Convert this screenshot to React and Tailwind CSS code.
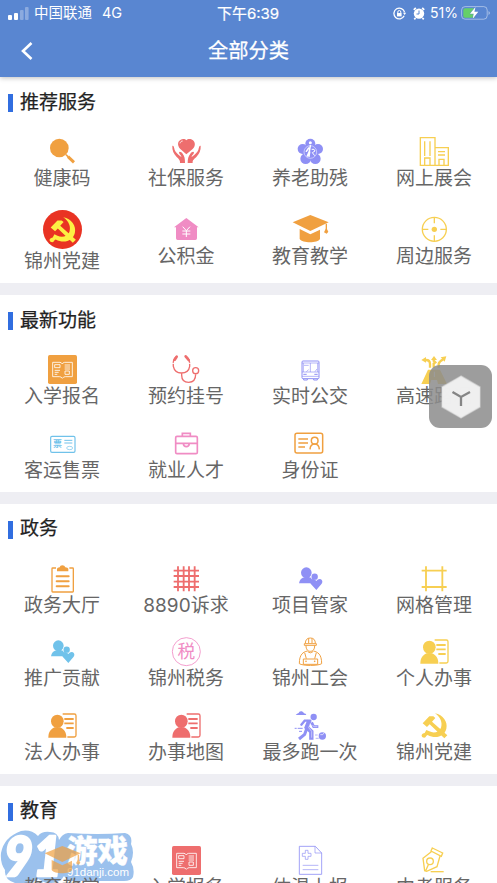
const ORANGE = "#f0a040";
const RED = "#ee6e6e";
const PURPLE = "#8f90f5";
const YELLOW = "#f7cf52";
const PINK = "#f08cc4";
const BLUE = "#70c2ea";

function Icon({ children, color, className = "size-[29px]" }) {
    return (
        <svg viewBox="0 0 87 87" className={`block overflow-visible ${className}`} color={color} fill="none">
            {children}
        </svg>
    );
}

function Magnifier() {
    return (
        <Icon color={ORANGE}>
            <circle cx="34" cy="33" r="28" fill="currentColor" />
            <path d="M54 53L61 60" stroke="currentColor" strokeWidth="5" />
            <path d="M60 59L78 76" stroke="currentColor" strokeWidth="9" />
        </Icon>
    );
}

function HeartHands() {
    return (
        <Icon color={RED}>
            <path d="M43 52L25 36C15 26 17 13 25 9C32 4 40 6 43 10C47 5 56 4 63 10C71 17 70 29 62 36Z" fill="currentColor" />
            <path d="M24 19C25 15 28 12 32 12" stroke="#fff" strokeWidth="2.5" />
            <g fill="currentColor">
                <path d="M1 27C5 25 6 31 8 39C11 46 18 52 24 57L28 60C29 55 22 52 21 47C22 42 28 45 32 50C38 57 39 66 39 78H24C25 69 20 66 14 60C5 51 0 40 1 27Z" />
                <path d="M86 27C82 25 81 31 79 39C76 46 69 52 63 57L59 60C58 55 65 52 66 47C65 42 59 45 55 50C49 57 47 66 47 78H62C61 69 67 66 73 60C82 51 87 40 86 27Z" />
            </g>
        </Icon>
    );
}

function Flower() {
    return (
        <Icon color={PURPLE}>
            <g fill="currentColor">
                <circle cx="43" cy="20" r="15" />
                <circle cx="20" cy="36" r="15" />
                <circle cx="66" cy="36" r="15" />
                <circle cx="29" cy="65" r="16" />
                <circle cx="58" cy="65" r="16" />
                <circle cx="43" cy="44" r="22" />
            </g>
            <circle cx="43" cy="45" r="19" stroke="#fff" strokeWidth="1.5" />
            <circle cx="43" cy="17" r="4.5" fill="#fff" />
            <path d="M43 26L40 43L34 57M38 33L31 43M41 45L39 58" stroke="#fff" strokeWidth="4.5" strokeLinecap="round" />
            <path d="M47 37H54L57 42L49 47L56 56" stroke="#fff" strokeWidth="3" />
        </Icon>
    );
}

function Buildings() {
    return (
        <Icon color={YELLOW}>
            <path d="M1 2H45V85H1ZM45 32H85V85H45M14 13V57M30 13V57M14 85V63H30V85M54 44H75M54 54H75M57 85V67H72V85" stroke="currentColor" strokeWidth="4" />
        </Icon>
    );
}

function Emblem() {
    return (
        <g>
            <path d="M45 7C69 11 84 33 79 53C74 75 48 86 23 72C18 73 19 79 13 80C8 80 4 77 5 72C6 68 11 67 14 66L19 57L28 61C42 68 57 63 63 50C68 35 62 19 45 7Z" fill="currentColor" />
            <path d="M8 37L28 16H40L46 21L36 32L82 73L73 82L29 40L21 48Z" fill="currentColor" />
        </g>
    );
}

function PartyBadge() {
    return (
        <Icon color="#fdf043" className="size-[39px]">
            <circle cx="43.5" cy="43.5" r="43.5" fill="#e93323" />
            <g transform="translate(11 11) scale(.76)">
                <Emblem />
            </g>
        </Icon>
    );
}

function PartyIcon() {
    return (
        <Icon color={YELLOW}>
            <Emblem />
        </Icon>
    );
}

function HouseYen() {
    return (
        <Icon color={PINK}>
            <path d="M43 9L80 37H75V70Q75 75 70 75H17Q12 75 12 70V37H6Z" fill="currentColor" />
            <path d="M32 35L43 47L54 35M43 47V66M31 48H55M31 57H55" stroke="#fff" strokeWidth="3" />
        </Icon>
    );
}

function GradCap() {
    return (
        <Icon color={ORANGE}>
            <path d="M43 0L98 22L43 48L-10 22Z" fill="currentColor" />
            <path d="M11 42L43 58L72 44V72C65 85 19 85 11 72Z" fill="currentColor" />
            <path d="M91 26V46" stroke="currentColor" strokeWidth="4" />
            <path d="M91 38L97 50L92 56L84 52Z" fill="currentColor" />
        </Icon>
    );
}

function Target() {
    return (
        <Icon color={YELLOW}>
            <circle cx="43" cy="43" r="36" stroke="currentColor" strokeWidth="4" />
            <circle cx="43" cy="43" r="8" fill="currentColor" />
            <path d="M43 7V25M43 61V79M7 43H25M61 43H79" stroke="currentColor" strokeWidth="4" />
        </Icon>
    );
}

function BookTile({ color }) {
    return (
        <Icon color={color}>
            <rect width="87" height="87" rx="5" fill="currentColor" />
            <path d="M36 22H14V65H34M34 65Q40 65 43 70Q46 65 52 65H73V22H50Q45 22 43 27Q40 22 36 22" stroke="#fff" strokeWidth="2.5" />
            <path d="M20 29H36V38H20ZM51 48H64V58H51ZM20 46H36M20 52H32M20 58H28M50 30H66M50 36H66M50 42H66" stroke="#fff" strokeWidth="2.5" />
        </Icon>
    );
}

function Stethoscope() {
    return (
        <Icon color={RED}>
            <path d="M13 5C2 12 3 25 4 34C7 48 16 54 28 54C42 54 51 47 53 34C54 20 52 10 42 4M29 54V61C29 77 39 82 50 82C63 82 71 75 71 58" stroke="currentColor" strokeWidth="4" />
            <path d="M14 5L8 14M41 4L50 15" stroke="currentColor" strokeWidth="8" strokeLinecap="round" />
            <circle cx="71" cy="47" r="9" stroke="currentColor" strokeWidth="4" />
            <path d="M0 25H8M49 25H57" stroke="#fff" strokeWidth="3" />
        </Icon>
    );
}

function Bus() {
    return (
        <Icon color={PURPLE}>
            <rect x="18" y="18" width="51" height="53" rx="3" stroke="currentColor" strokeWidth="3" />
            <path d="M18 24H69M18 51H69M43 24V51M24 31H38M22 24V51M65 24V51M18 64H69M31 50L38 44M57 50L63 42" stroke="currentColor" strokeWidth="2" />
            <path d="M23 72V75H34V72M53 72V75H64V72" stroke="currentColor" strokeWidth="3" />
            <path d="M22 58H32M55 58H65" stroke="currentColor" strokeWidth="3" />
        </Icon>
    );
}

function Roads() {
    return (
        <Icon color={YELLOW}>
            <path d="M30 38V27Q30 15 18 15H14M41 38V26L46 22L41 17V12M56 38V27Q57 20 70 13" stroke="currentColor" strokeWidth="7" />
            <path d="M4 15L18 6V23ZM33 15L42 3L51 15ZM62 7L79 4L74 20Z" fill="currentColor" />
            <path d="M24 44H60L81 87H54L51 75H34L30 87H4Z" fill="currentColor" />
            <path d="M43 50V66" stroke="#fff" strokeWidth="3" />
        </Icon>
    );
}

function Ticket() {
    return (
        <Icon color={BLUE}>
            <rect x="8" y="22" width="73" height="48" rx="4" stroke="currentColor" strokeWidth="3.5" />
            <text x="15" y="54" fontSize="27" fontWeight="700" fill="currentColor">票</text>
            <path d="M49 34H73M49 42H73" stroke="currentColor" strokeWidth="3" />
            <ellipse cx="65" cy="57" rx="9" ry="5" stroke="currentColor" strokeWidth="2" />
        </Icon>
    );
}

function Briefcase() {
    return (
        <Icon color={PINK}>
            <rect x="11" y="22" width="65" height="52" rx="4" stroke="currentColor" strokeWidth="5" />
            <path d="M31 21V13H55V21M11 43H76M34 44Q35 53 43 53Q51 53 52 44" stroke="currentColor" strokeWidth="5" />
        </Icon>
    );
}

function IdCard() {
    return (
        <Icon color={ORANGE}>
            <rect x="-3" y="13" width="83" height="59" rx="6" stroke="currentColor" strokeWidth="4.5" />
            <path d="M7 30H36M7 42H36M7 54H27M42 61Q43 45 56 45Q69 45 70 61" stroke="currentColor" strokeWidth="4.5" />
            <circle cx="56" cy="35" r="10" stroke="currentColor" strokeWidth="4.5" />
        </Icon>
    );
}

function Clipboard() {
    return (
        <Icon color={ORANGE}>
            <path d="M24 12H14Q12 12 12 14V82Q12 84 14 84H74Q76 84 76 82V14Q76 12 74 12H64" stroke="currentColor" strokeWidth="4" />
            <path d="M27 22V14Q28 11 35 10Q36 4 43 4Q50 4 52 10Q60 11 61 14V22Z" fill="currentColor" />
            <path d="M26 37H62M26 52H62M26 67H62" stroke="currentColor" strokeWidth="6" strokeLinecap="round" />
        </Icon>
    );
}

function GridLines() {
    return (
        <Icon color={RED}>
            <path d="M18 7V82M35 7V82M51 7V82M68 7V82M5 20H81M5 36H81M5 53H81M5 69H81" stroke="currentColor" strokeWidth="5.5" />
        </Icon>
    );
}

function PeopleHeart({ color }) {
    return (
        <Icon color={color}>
            <circle cx="31" cy="26" r="16" fill="currentColor" />
            <path d="M9 58Q11 42 28 39H38L49 43L46 58Z" fill="currentColor" />
            <circle cx="56" cy="38" r="11" fill="#fff" />
            <circle cx="56" cy="38" r="9.5" fill="currentColor" />
            <path d="M61 78L44 59Q40 50 47 46Q55 43 61 51Q67 43 75 46Q82 52 77 59Z" fill="currentColor" />
        </Icon>
    );
}

function Hash() {
    return (
        <Icon color={YELLOW}>
            <path d="M18 7V82M67 7V82M5 20H80M5 69H80" stroke="currentColor" strokeWidth="5.5" />
        </Icon>
    );
}

function Tax() {
    return (
        <Icon color={PINK}>
            <circle cx="43" cy="44" r="42" stroke="currentColor" strokeWidth="2.5" />
            <text x="43" y="63" textAnchor="middle" fontSize="53" fill="currentColor">税</text>
        </Icon>
    );
}

function Worker() {
    return (
        <Icon color={ORANGE}>
            <g stroke="currentColor" strokeWidth="3">
                <path d="M28 19C28 9 33 3 43 3C53 3 58 9 58 19M25 20H61V25H25ZM38 4V18M48 4V18M30 26C30 38 36 43 43 43C50 43 56 38 56 26" />
                <path d="M34 42C22 45 10 51 10 80C20 87 67 87 77 80C77 51 65 45 52 42M26 47L31 65M61 47L56 65M35 44Q43 51 51 44M22 66H65V82H22Z" />
            </g>
            <circle cx="30" cy="73" r="2.5" fill="currentColor" />
            <circle cx="56" cy="73" r="2.5" fill="currentColor" />
        </Icon>
    );
}

function PersonCard({ color }) {
    return (
        <Icon color={color}>
            <ellipse cx="28" cy="31" rx="19" ry="20" fill="currentColor" />
            <path d="M1 80C1 64 7 55 20 49H36C49 55 55 64 55 80Z" fill="currentColor" />
            <path d="M44 9H79Q84 9 84 14V73Q84 78 79 78H58" stroke="currentColor" strokeWidth="4" />
            <path d="M49 24H77M49 37H77M55 51H77" stroke="currentColor" strokeWidth="5.5" />
        </Icon>
    );
}

function Runner() {
    return (
        <Icon color={PURPLE}>
            <path d="M-1 12Q3 7 8 6Q9 0 17 1Q22 2 24 7Q30 8 31 12Z" fill="currentColor" />
            <circle cx="53" cy="18" r="9.5" fill="currentColor" />
            <path d="M43 29H26L16 41" stroke="currentColor" strokeWidth="7" strokeLinecap="round" />
            <path d="M40 29L32 49L46 62V86" stroke="currentColor" strokeWidth="13" />
            <path d="M32 53L26 70L9 84" stroke="currentColor" strokeWidth="9" />
            <path d="M47 34L53 47H67" stroke="currentColor" strokeWidth="8" />
            <path d="M43 37L38 50L47 61V80M50 42L53 47H64" stroke="#fff" strokeOpacity=".75" strokeWidth="2" />
            <path d="M-4 52H2M5 52H20M9 61H18" stroke="currentColor" strokeWidth="3" />
            <circle cx="79" cy="75" r="11" fill="currentColor" />
            <path d="M57 72H65M59 82H68" stroke="currentColor" strokeWidth="2" />
            <path d="M73 71H80L84 66" stroke="#fff" strokeWidth="2" />
        </Icon>
    );
}

function MedicalDoc() {
    return (
        <Icon color={PURPLE}>
            <path d="M10 1H58L77 21V85H10Z" stroke="currentColor" strokeWidth="2.5" />
            <path d="M57 1V21H77M20 58H67M20 71H67" stroke="currentColor" strokeWidth="2" />
            <path d="M28 13H36V22H45V31H36V40H28V31H19V22H28Z" stroke="currentColor" strokeWidth="2" />
        </Icon>
    );
}

function Pen() {
    return (
        <Icon color={YELLOW}>
            <g stroke="currentColor" strokeWidth="4">
                <path d="M37 6L68 21L64 31L33 15ZM34 17L9 37L14 74L20 76L51 62L60 30M17 74L25 56" />
                <circle cx="30" cy="46" r="10" />
                <path d="M32 77H71" />
            </g>
        </Icon>
    );
}

const sections = [
    {
        title: "推荐服务",
        items: [
            { label: "健康码", icon: <Magnifier /> },
            { label: "社保服务", icon: <HeartHands /> },
            { label: "养老助残", icon: <Flower /> },
            { label: "网上展会", icon: <Buildings /> },
            { label: "锦州党建", icon: <PartyBadge /> },
            { label: "公积金", icon: <HouseYen /> },
            { label: "教育教学", icon: <GradCap /> },
            { label: "周边服务", icon: <Target /> },
        ],
    },
    {
        title: "最新功能",
        items: [
            { label: "入学报名", icon: <BookTile color={ORANGE} /> },
            { label: "预约挂号", icon: <Stethoscope /> },
            { label: "实时公交", icon: <Bus /> },
            { label: "高速路况", icon: <Roads /> },
            { label: "客运售票", icon: <Ticket /> },
            { label: "就业人才", icon: <Briefcase /> },
            { label: "身份证", icon: <IdCard /> },
        ],
    },
    {
        title: "政务",
        items: [
            { label: "政务大厅", icon: <Clipboard /> },
            { label: "8890诉求", icon: <GridLines /> },
            { label: "项目管家", icon: <PeopleHeart color={PURPLE} /> },
            { label: "网格管理", icon: <Hash /> },
            { label: "推广贡献", icon: <PeopleHeart color={BLUE} /> },
            { label: "锦州税务", icon: <Tax /> },
            { label: "锦州工会", icon: <Worker /> },
            { label: "个人办事", icon: <PersonCard color={YELLOW} /> },
            { label: "法人办事", icon: <PersonCard color={ORANGE} /> },
            { label: "办事地图", icon: <PersonCard color={RED} /> },
            { label: "最多跑一次", icon: <Runner /> },
            { label: "锦州党建", icon: <PartyIcon /> },
        ],
    },
    {
        title: "教育",
        watermark: true,
        items: [
            { label: "教育教学", icon: <div className="opacity-70"><GradCap /></div> },
            { label: "入学报名", icon: <BookTile color={RED} /> },
            { label: "体温上报", icon: <MedicalDoc /> },
            { label: "中考服务", icon: <Pen /> },
        ],
    },
];

function StatusBar() {
    return (
        <div className="grid h-[26px] grid-cols-3 items-center text-sm leading-none">
            <div className="flex items-center pl-2">
                <svg width="21" height="13" viewBox="0 0 21 13" fill="#fff">
                    <rect y="8" width="4" height="5" rx="1" />
                    <rect x="6" y="6" width="4" height="7" rx="1" />
                    <rect x="12" y="3" width="3.6" height="10" rx="1" opacity=".3" />
                    <rect x="17" width="3.6" height="13" rx="1" opacity=".3" />
                </svg>
                <span className="ml-[5px] text-[14.5px]">中国联通</span>
                <span className="ml-[10px] text-[14.5px]">4G</span>
            </div>
            <div className="pr-px text-center text-[15px] [-webkit-text-stroke:0.2px]">下午6:39</div>
            <div className="flex items-center justify-end pr-[7px]">
                <svg width="13" height="13" viewBox="0 0 13 13" fill="none" stroke="#fff" strokeWidth="1.3">
                    <path d="M11.2 8.8A5.4 5.4 0 1 1 11.6 5.3" />
                    <path d="M10 5.7H13.2L11.6 8Z" fill="#fff" stroke="none" />
                    <rect x="4" y="6" width="4.6" height="3.4" fill="#fff" stroke="none" />
                    <path d="M4.8 6V5A1.5 1.5 0 0 1 7.8 5V6" strokeWidth="1" />
                </svg>
                <svg className="ml-[7px]" width="12" height="13" viewBox="0 0 12 13" fill="none">
                    <circle cx="6" cy="6.6" r="5.2" fill="#fff" />
                    <path d="M.8 2.8L2.8 .9M11.2 2.8L9.2 .9M2.5 11L1.3 12.3M9.5 11L10.7 12.3" stroke="#fff" strokeWidth="1.8" />
                    <path d="M6 3.5V7H3.5" stroke="#5986d1" />
                </svg>
                <span className="ml-[5px] text-[14px]">51%</span>
                <svg className="ml-[3px]" width="29" height="14" viewBox="0 0 29 14">
                    <rect x=".6" y=".6" width="25.6" height="12.6" rx="3.5" fill="none" stroke="#fff" strokeOpacity=".45" />
                    <path d="M27.5 5V9Q29 8 29 7Q29 6 27.5 5" fill="#fff" fillOpacity=".45" />
                    <path d="M4 2.3H14V11.7H4Q2.3 11.7 2.3 10V4Q2.3 2.3 4 2.3" fill="#65cf68" />
                    <path d="M14.5 1L9 7.8H12.7L11.7 12.8L17.3 5.8H13.4Z" fill="#fff" stroke="#5986d1" strokeWidth=".8" paintOrder="stroke" />
                </svg>
            </div>
        </div>
    );
}

function Watermark() {
    return (
        <svg className="absolute top-[44px] left-0 overflow-visible" width="134" height="54" viewBox="0 0 134 54" fill="#fff">
            <path d="M21 1Q31 -1 38 6Q42 1 50 2Q58 2 59 10Q62 4 68 3Q98 5 125 3Q133 5 131 14Q135 22 131 32Q135 39 133 47Q131 51 124 51H72Q66 50 64 46Q60 54 46 53L38 49Q30 56 15 53Q4 50 5 40Q0 33 1 23Q4 7 21 1Z" fill="#9bc1ed" />
            <text x="4" y="46" fontSize="56" fontWeight="900" fontStyle="italic" stroke="#fff" strokeWidth="2.5" strokeLinejoin="round" textLength="58" lengthAdjust="spacingAndGlyphs" style={{ fontFamily: "Lato, sans-serif" }}>91</text>
            <text x="67" y="32" fontSize="30.5" fontWeight="900" stroke="#fff" strokeWidth=".4">游戏</text>
            <text x="67" y="45.5" fontSize="11.5" textLength="62" style={{ fontFamily: "Liberation Sans, sans-serif" }}>91danji.com</text>
        </svg>
    );
}

function Section({ title, items, watermark }) {
    return (
        <section className="relative bg-white">
            {watermark && <Watermark />}
            <div className="flex h-[50px] items-center pl-[7.5px]">
                <div className="mt-[2px] h-[18px] w-[5px] bg-[#316ee0]" />
                <h2 className="ml-[7.5px] text-[19px] leading-none text-[#222] [-webkit-text-stroke:0.25px]">{title}</h2>
            </div>
            <div className="relative grid w-[496px] grid-cols-4">
                {items.map((item) => (
                    <div key={item.label} className="flex min-h-[73.3px] flex-col items-center justify-center py-[10px]">
                        {item.icon}
                        <span className="h-6 text-[19px] leading-[26.5px] whitespace-nowrap text-[#666]">{item.label}</span>
                    </div>
                ))}
            </div>
        </section>
    );
}

function FloatingButton() {
    return (
        <div className="absolute top-[365px] left-[429px] z-20 flex size-[63px] items-center justify-center rounded-[11px] bg-[#8c8c8c]/85">
            <svg width="42" height="44" viewBox="0 0 42 44" fill="none">
                <path d="M21 1L40 12V32L21 43L2 32V12Z" fill="#f2f2f2" fillOpacity=".96" stroke="#ddd" strokeOpacity=".5" strokeWidth="1.5" />
                <path d="M12.5 17L21 22L30 17M21 22V31" stroke="#858585" strokeWidth="2.3" />
            </svg>
        </div>
    );
}

export default function App() {
    return (
        <div className="relative h-[883px] w-full overflow-hidden bg-[#eeeef3] font-['Inter','Noto_Sans_CJK_SC',sans-serif]">
            <header className="relative z-10 h-[77px] bg-[#5986d1] text-white shadow-[0_1px_5px_rgba(0,0,0,0.25)]">
                <StatusBar />
                <div className="relative flex h-[50px] items-center justify-center">
                    <svg className="absolute left-[21px]" width="12" height="18" viewBox="0 0 12 18" fill="none" stroke="#fff" strokeWidth="2.6">
                        <path d="M10.5 1L2 9L10.5 17" />
                    </svg>
                    <h1 className="text-[20.3px] leading-none [-webkit-text-stroke:0.25px]">全部分类</h1>
                </div>
            </header>
            <main className="flex flex-col gap-3">
                {sections.map((section) => (
                    <Section key={section.title} {...section} />
                ))}
            </main>
            <FloatingButton />
        </div>
    );
}
